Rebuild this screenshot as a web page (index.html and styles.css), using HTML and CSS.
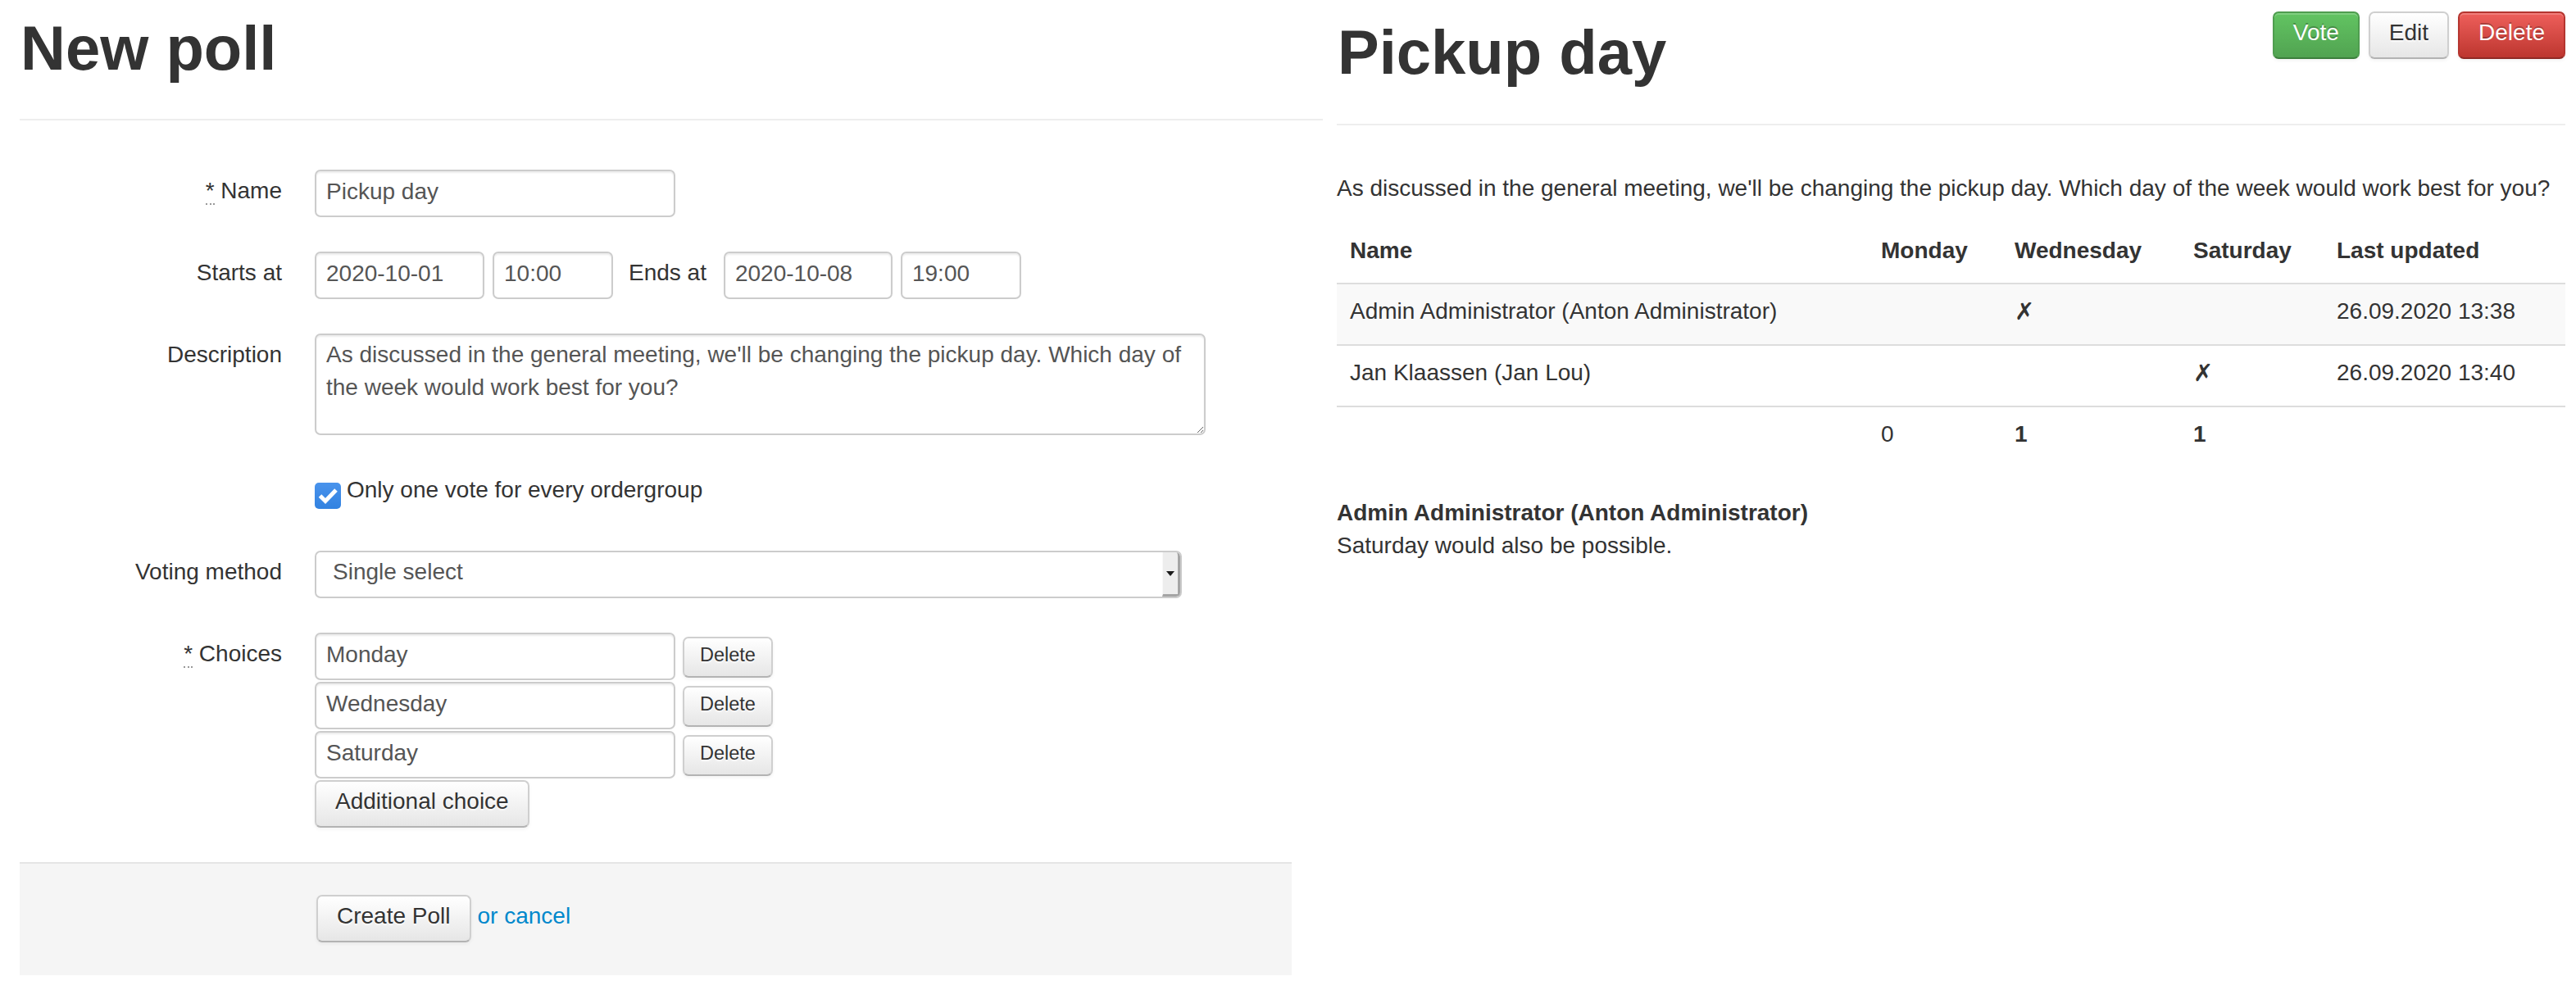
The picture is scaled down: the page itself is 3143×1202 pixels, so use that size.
FILE: index.html
```html
<!DOCTYPE html>
<html lang="en">
<head>
<meta charset="utf-8">
<title>Polls</title>
<link rel="stylesheet" href="styles.css">
</head>
<body>
<div class="screens">
  <section class="panel panel-form">
    <div class="page-header page-header-form">
      <h1>New poll</h1>
    </div>
    <form class="form-horizontal">
      <div class="control-group">
        <label class="control-label"><abbr title="required">*</abbr> Name</label>
        <div class="controls">
          <input class="input" type="text" value="Pickup day">
        </div>
      </div>
      <div class="control-group">
        <label class="control-label">Starts at</label>
        <div class="controls controls-inline">
          <input class="input input-date" type="text" value="2020-10-01">
          <input class="input input-time" type="text" value="10:00">
          <span class="inline-label">Ends at</span>
          <input class="input input-date input-date-end" type="text" value="2020-10-08">
          <input class="input input-time" type="text" value="19:00">
        </div>
      </div>
      <div class="control-group">
        <label class="control-label">Description</label>
        <div class="controls">
          <textarea class="textarea">As discussed in the general meeting, we'll be changing the pickup day. Which day of the week would work best for you?</textarea>
        </div>
      </div>
      <div class="control-group control-group-check">
        <div class="control-label"></div>
        <div class="controls">
          <label class="checkbox">
            <span class="check" role="checkbox" aria-checked="true">
              <svg width="32" height="32" viewBox="0 0 32 32"><polyline points="6.5,16 13,22.5 26,9" fill="none" stroke="#fff" stroke-width="5"/></svg>
            </span>
            <span>Only one vote for every ordergroup</span>
          </label>
        </div>
      </div>
      <div class="control-group">
        <label class="control-label">Voting method</label>
        <div class="controls">
          <div class="select" role="combobox" aria-expanded="false">
            <span class="select-value">Single select</span>
            <span class="select-arrow"><svg width="10" height="6" viewBox="0 0 10 6"><path d="M0 0H10L5 6Z" fill="#1a1a1a"/></svg></span>
          </div>
        </div>
      </div>
      <div class="control-group">
        <label class="control-label"><abbr title="required">*</abbr> Choices</label>
        <div class="controls">
          <div class="choice">
            <input class="input" type="text" value="Monday">
            <button class="btn btn-small" type="button">Delete</button>
          </div>
          <div class="choice">
            <input class="input" type="text" value="Wednesday">
            <button class="btn btn-small" type="button">Delete</button>
          </div>
          <div class="choice">
            <input class="input" type="text" value="Saturday">
            <button class="btn btn-small" type="button">Delete</button>
          </div>
          <button class="btn" type="button">Additional choice</button>
        </div>
      </div>
      <div class="form-actions">
        <button class="btn" type="button">Create Poll</button>
        <a class="link" href="#">or cancel</a>
      </div>
    </form>
  </section>

  <section class="panel panel-show">
    <div class="page-header page-header-show">
      <h1>Pickup day</h1>
      <div class="actions">
        <button class="btn btn-success" type="button">Vote</button>
        <button class="btn" type="button">Edit</button>
        <button class="btn btn-danger" type="button">Delete</button>
      </div>
    </div>
    <p class="desc">As discussed in the general meeting, we'll be changing the pickup day. Which day of the week would work best for you?</p>
    <table class="table">
      <colgroup>
        <col class="col-name">
        <col class="col-mon">
        <col class="col-wed">
        <col class="col-sat">
        <col class="col-upd">
      </colgroup>
      <thead>
        <tr><th>Name</th><th>Monday</th><th>Wednesday</th><th>Saturday</th><th>Last updated</th></tr>
      </thead>
      <tbody>
        <tr><td>Admin Administrator (Anton Administrator)</td><td></td><td><span class="mark">✗</span></td><td></td><td>26.09.2020 13:38</td></tr>
        <tr><td>Jan Klaassen (Jan Lou)</td><td></td><td></td><td><span class="mark">✗</span></td><td>26.09.2020 13:40</td></tr>
      </tbody>
      <tfoot>
        <tr><td></td><td>0</td><td><strong>1</strong></td><td><strong>1</strong></td><td></td></tr>
      </tfoot>
    </table>
    <div class="comment">
      <strong class="comment-author">Admin Administrator (Anton Administrator)</strong>
      <div>Saturday would also be possible.</div>
    </div>
  </section>
</div>
</body>
</html>
```

FILE: styles.css
```css
* {
  box-sizing: border-box;
}

html,
body {
  margin: 0;
  padding: 0;
  background: #fff;
}

body {
  width: 3143px;
  font-family: "Liberation Sans", Helvetica, Arial, sans-serif;
  font-size: 28px;
  line-height: 40px;
  color: #333;
}

.screens {
  display: flex;
  align-items: flex-start;
}

.panel-form {
  margin-left: 24px;
  width: 1590px;
  flex: none;
}

.panel-show {
  margin-left: 17px;
  width: 1499px;
  flex: none;
}

/* page header */
.page-header {
  border-bottom: 2px solid #eee;
}

.page-header h1 {
  margin: 0 0 0 1px;
  font-size: 76px;
  line-height: 80px;
  font-weight: bold;
  color: #333;
}

.page-header-form {
  padding-top: 19px;
  padding-bottom: 46px;
}

.page-header-show {
  display: flex;
  justify-content: space-between;
  align-items: flex-start;
  padding-bottom: 47px;
}

.page-header-show h1 {
  margin-top: 24px;
}

.actions {
  display: flex;
  gap: 11px;
  margin-top: 14px;
}

/* form */
.form-horizontal {
  margin: 60px 0 0;
}

.control-group {
  display: flex;
  align-items: flex-start;
  margin-bottom: 42px;
}

.control-group-check {
  margin-bottom: 51px;
}

.control-label {
  width: 320px;
  flex: none;
  text-align: right;
  padding-top: 6px;
  font-weight: normal;
}

abbr[title] {
  text-decoration: none;
  border-bottom: 2px dotted #999;
  cursor: help;
}

.controls {
  margin-left: 40px;
  flex: 1;
  min-width: 0;
}

.controls-inline {
  display: flex;
  align-items: flex-start;
}

.input {
  display: block;
  width: 440px;
  height: 58px;
  margin: 0;
  padding: 0 12px 5px;
  border: 2px solid #ccc;
  border-radius: 7px;
  box-shadow: inset 0 2px 2px rgba(0, 0, 0, 0.075);
  background: #fff;
  font-family: inherit;
  font-size: 28px;
  line-height: normal;
  color: #555;
  outline: none;
}

.input-date {
  width: 207px;
}

.input-date-end {
  width: 206px;
}

.input-time {
  width: 147px;
  margin-left: 10px;
}

.inline-label {
  padding-top: 6px;
  margin: 0 21px 0 19px;
}

.textarea {
  display: block;
  width: 1087px;
  height: 124px;
  margin: 0;
  padding: 4px 12px;
  border: 2px solid #ccc;
  border-radius: 7px;
  box-shadow: inset 0 2px 2px rgba(0, 0, 0, 0.075);
  font-family: inherit;
  font-size: 28px;
  line-height: 40px;
  color: #555;
  outline: none;
}

.checkbox {
  display: flex;
  align-items: flex-start;
  padding-top: 5px;
}

.check {
  flex: none;
  width: 32px;
  height: 32px;
  margin-top: 11px;
  margin-right: 7px;
  border-radius: 5px;
  background: linear-gradient(#4993ec, #3282e0);
  display: flex;
}

.select {
  display: flex;
  align-items: stretch;
  width: 1058px;
  height: 58px;
  border: 2px solid #ccc;
  border-radius: 7px;
  background: #fff;
  color: #555;
  overflow: hidden;
}

.select-value {
  flex: 1;
  display: flex;
  align-items: center;
  padding: 0 0 6px 20px;
}

.select-arrow {
  flex: none;
  width: 22px;
  display: flex;
  align-items: center;
  justify-content: center;
  background: #ededed;
  border-left: 1px solid #f8f8f8;
  border-right: 3px solid #a4a4a4;
  border-bottom: 3px solid #a4a4a4;
  border-top-right-radius: 5px;
}

.choice {
  display: flex;
  align-items: flex-start;
  margin-bottom: 2px;
}

/* buttons */
.btn {
  display: inline-flex;
  align-items: center;
  justify-content: center;
  height: 58px;
  margin: 0;
  padding: 0 23px 7px;
  border: 2px solid;
  border-color: #cfcfcf #cfcfcf #b3b3b3;
  border-radius: 7px;
  background: linear-gradient(#ffffff, #e6e6e6);
  box-shadow: inset 0 2px 0 rgba(255, 255, 255, 0.2), 0 2px 4px rgba(0, 0, 0, 0.05);
  font-family: inherit;
  font-size: 28px;
  line-height: 40px;
  color: #333;
  text-shadow: 0 2px 2px rgba(255, 255, 255, 0.75);
  white-space: nowrap;
  cursor: pointer;
}

.btn-small {
  height: 50px;
  margin-left: 9px;
  margin-top: 5px;
  padding: 0 19px 7px;
  font-size: 23.5px;
}

.btn-success {
  background: linear-gradient(#62c462, #51a351);
  border-color: #4f9d4f #4f9d4f #3d7f3d;
  color: #fff;
  text-shadow: 0 -2px 0 rgba(0, 0, 0, 0.25);
}

.btn-danger {
  background: linear-gradient(#ee5f5b, #bd362f);
  border-color: #b5352f #b5352f #8f2a25;
  color: #fff;
  text-shadow: 0 -2px 0 rgba(0, 0, 0, 0.25);
}

.form-actions {
  width: 1552px;
  display: flex;
  align-items: baseline;
  padding: 38px 0 40px 362px;
  border-top: 2px solid #e5e5e5;
  background: #f5f5f5;
}

.link {
  margin-left: 8px;
  color: #0088cc;
  text-decoration: none;
}

/* show page */
.desc {
  margin: 57px 0 23px;
}

.table {
  width: 100%;
  table-layout: fixed;
  border-collapse: collapse;
  margin-bottom: 37px;
}

.col-name { width: 648px; }
.col-mon { width: 163px; }
.col-wed { width: 218px; }
.col-sat { width: 175px; }
.col-upd { width: 295px; }

.table th,
.table td {
  padding: 13px 16px 19px;
  line-height: 40px;
  text-align: left;
  vertical-align: top;
}

.table th {
  font-weight: bold;
}

.table tbody td,
.table tfoot td {
  border-top: 2px solid #ddd;
}

.table tbody tr:nth-child(odd) td {
  background: #f9f9f9;
}

.mark {
  font-family: "DejaVu Sans", sans-serif;
  font-size: 29px;
}

.comment-author {
  display: block;
  font-weight: bold;
}
```
